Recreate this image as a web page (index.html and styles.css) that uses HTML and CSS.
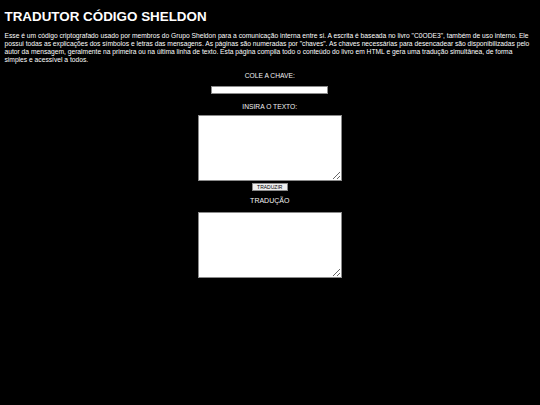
FILE: index.html
```html
<!DOCTYPE html>
<html lang="pt">
<head>
<meta charset="utf-8">
<title>Tradutor Código Sheldon</title>
<link rel="stylesheet" href="styles.css">
</head>
<body>
<div class="page">
  <h1 class="title">TRADUTOR CÓDIGO SHELDON</h1>
  <p class="intro">Esse é um código criptografado usado por membros do Grupo Sheldon para a comunicação interna entre si. A escrita é baseada no livro "C0ODE3", também de uso interno. Ele possui todas as explicações dos símbolos e letras das mensagens. As páginas são numeradas por "chaves". As chaves necessárias para desencadear são disponibilizadas pelo autor da mensagem, geralmente na primeira ou na última linha de texto. Esta página compila todo o conteúdo do livro em HTML e gera uma tradução simultânea, de forma simples e acessível a todos.</p>
  <div class="form">
    <div class="label label-key">COLE A CHAVE:</div>
    <input class="key" type="text">
    <div class="label label-text">INSIRA O TEXTO:</div>
    <textarea class="box box-in"></textarea>
    <button class="btn" type="button">TRADUZIR</button>
    <div class="label label-out">TRADUÇÃO</div>
    <textarea class="box box-out"></textarea>
  </div>
</div>
</body>
</html>
```
FILE: styles.css
```css
html, body {
  margin: 0;
  padding: 0;
  background: #000;
}
body {
  color: #fff;
  font-family: "Liberation Sans", Arial, sans-serif;
}
.page {
  padding: 8.5px 5px 0 4.5px;
}
.title {
  margin: 0;
  font-size: 13.4px;
  line-height: 16px;
  font-weight: bold;
}
.intro {
  margin: 7px 0 0;
  font-size: 6.7px;
  line-height: 8px;
}
.form {
  display: flex;
  flex-direction: column;
  align-items: center;
}
.label {
  font-size: 6.7px;
  line-height: 8px;
  color: #f2f2f2;
}
.label-key { margin-top: 8px; }
.label-text { margin-top: 9px; }
.label-out { margin-top: 6px; font-size: 7px; }
.key {
  margin: 6px 0 0;
  width: 117px;
  height: 8px;
  box-sizing: border-box;
  border: 1px solid #8a8a8a;
  background: #fff;
  padding: 0;
  outline: none;
}
.box {
  width: 144px;
  height: 66px;
  box-sizing: border-box;
  border: 1px solid #8a8a8a;
  background: #fff;
  padding: 0;
  margin: 0;
  outline: none;
}
.box-in { margin-top: 4.5px; }
.box-out { margin-top: 6.5px; }
.btn {
  margin-top: 2px;
  width: 36px;
  height: 8px;
  padding: 0;
  box-sizing: border-box;
  border: 1px solid #8a8a8a;
  background: #efefef;
  color: #000;
  font-family: "Liberation Sans", Arial, sans-serif;
  font-size: 5px;
  line-height: 6px;
}
```
